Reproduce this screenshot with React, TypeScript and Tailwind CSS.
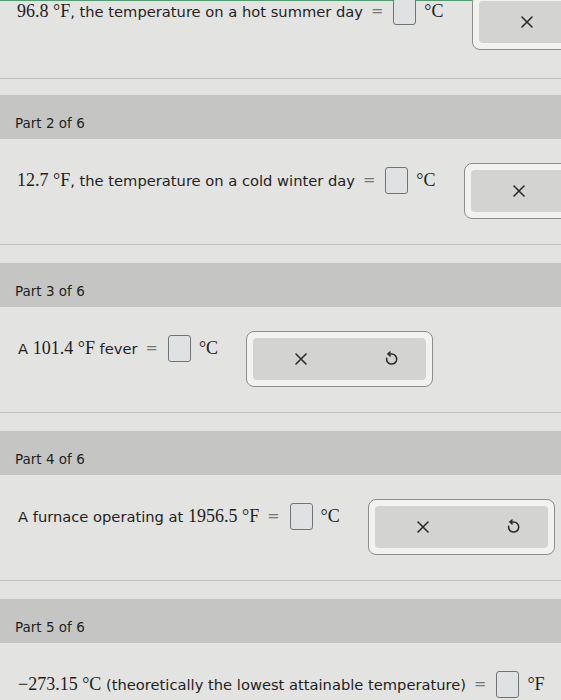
import React from 'react';

function XIcon() {
  return (
    <svg width="14" height="14" viewBox="0 0 14 14" className="text-[#2b2b2b]">
      <path d="M2 2 L12 12 M12 2 L2 12" stroke="currentColor" strokeWidth="1.6" strokeLinecap="round" />
    </svg>
  );
}

function UndoIcon() {
  return (
    <svg width="18" height="18" viewBox="0 0 16 16" className="text-[#2b2b2b]">
      <path
        d="M5.5 3.5 H8.5 A4.5 4.5 0 1 1 4.1 7.4"
        fill="none"
        stroke="currentColor"
        strokeWidth="1.4"
        strokeLinecap="round"
      />
      <path d="M7.2 1.8 L5.4 3.5 L7.2 5.2" fill="none" stroke="currentColor" strokeWidth="1.4" strokeLinecap="round" strokeLinejoin="round" />
    </svg>
  );
}

const serif = "font-['Liberation_Serif','Times_New_Roman',serif] text-[18px]";

function AnswerBox() {
  return <span className="ml-[10px] w-[23px] h-[27px] shrink-0 rounded-[3px] border-[1.5px] border-[#6f7478] bg-[#dfe1e2]" />;
}

function Question({ pre, unit, tools = true }: { pre: React.ReactNode; unit: string; tools?: boolean }) {
  return (
    <div className="flex items-start whitespace-nowrap">
      <div className="flex items-center h-[27px]">
        <span className="text-[14.7px] text-[#1f1f1f]">{pre}</span>
        <span className="ml-[8px] text-[14.7px] text-[#777]">=</span>
        <AnswerBox />
        <span className={`ml-[8px] ${serif} text-[#1f1f1f]`}>°{unit}</span>
      </div>
      {tools && (
        <div className="ml-7 -mt-1 shrink-0 w-[187px] h-[56px] rounded-[8px] border border-[#8d8d8d] bg-[#f2f2f1] p-[6px]">
          <div className="flex h-full items-center rounded-[4px] bg-[#d3d4d2]">
            <span className="ml-[41px]">
              <XIcon />
            </span>
            <span className="ml-[74px]">
              <UndoIcon />
            </span>
          </div>
        </div>
      )}
    </div>
  );
}

function Header({ n }: { n: number }) {
  return (
    <div className="h-[44px] bg-[#c5c6c3] pl-[15px] pt-[18px] text-[13.5px] text-[#1f1f1f]">
      Part {n} of 6
    </div>
  );
}

export default function App() {
  return (
    <div className="w-[561px] h-[700px] overflow-hidden bg-[#e3e3e1] font-['DejaVu_Sans','Verdana',sans-serif]">
      <div className="h-px bg-[#5a9a72]" />
      {/* part 1 */}
      <div className="flex flex-col h-[78px] border-b border-[#c2c2c0] pl-[17px]">
        <div className="-mt-[3px]">
          <Question
            unit="C"
            pre={
              <>
                <span className={serif}>96.8 °F</span>, the temperature on a hot summer day
              </>
            }
          />
        </div>
      </div>
      <div className="h-[16px]" />

      <Header n={2} />
      <div className="h-[106px] border-b border-[#c2c2c0] pl-[17px] pt-7">
        <Question
          unit="C"
          pre={
            <>
              <span className={serif}>12.7 °F</span>, the temperature on a cold winter day
            </>
          }
        />
      </div>
      <div className="h-[18px]" />

      <Header n={3} />
      <div className="h-[106px] border-b border-[#c2c2c0] pl-[18px] pt-7">
        <Question
          unit="C"
          pre={
            <>
              A <span className={serif}>101.4 °F</span> fever
            </>
          }
        />
      </div>
      <div className="h-[18px]" />

      <Header n={4} />
      <div className="h-[106px] border-b border-[#c2c2c0] pl-[18px] pt-7">
        <Question
          unit="C"
          pre={
            <>
              A furnace operating at <span className={serif}>1956.5 °F</span>
            </>
          }
        />
      </div>
      <div className="h-[18px]" />

      <Header n={5} />
      <div className="pl-[18px] pt-7">
        <Question
          unit="F"
          tools={false}
          pre={
            <>
              <span className={serif}>−273.15 °C</span> (theoretically the lowest attainable temperature)
            </>
          }
        />
      </div>
    </div>
  );
}
